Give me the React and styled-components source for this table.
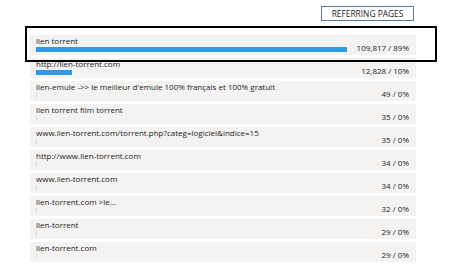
import React from "react";
import styled, { createGlobalStyle } from "styled-components";

const Global = createGlobalStyle`
  html, body { margin: 0; padding: 0; background: #ffffff; }
  body { font-family: "Open Sans", "Liberation Sans", sans-serif; color: #222; }
`;

const Page = styled.div`
  position: relative;
  width: 466px;
  height: 264px;
  overflow: hidden;
`;

const Panel = styled.div`
  margin-left: 30px;
  width: 386px;
  padding-top: 6px;
  display: flex;
  flex-direction: column;
`;

const HeaderRow = styled.div`
  display: flex;
  justify-content: flex-end;
  padding-right: 2px;
  margin-bottom: 14px;
`;

const HeaderTag = styled.div`
  box-sizing: border-box;
  width: 93px;
  height: 15px;
  border: 1px solid #5b7896;
  font-size: 8.4px;
  line-height: 13px;
  text-align: center;
  color: #222;
`;

const List = styled.div`
  display: flex;
  flex-direction: column;
  gap: 3px;
`;

const Row = styled.div`
  box-sizing: border-box;
  height: 20px;
  background: #f4f3f2;
  padding: 1px 7px 0 6px;
  display: grid;
  grid-template-columns: 311px 1fr;
  align-items: end;
`;

const Left = styled.div`
  display: flex;
  flex-direction: column;
  padding-bottom: 4px;
`;

const Label = styled.div`
  font-size: 8px;
  line-height: 10px;
  height: 10px;
  white-space: nowrap;
  color: #222;
  margin-bottom: 1px;
`;

const Bar = styled.div`
  height: 5px;
  background: ${(p) => (p.$faint ? "rgba(45,154,232,0.25)" : "#2d9ae8")};
`;

const Value = styled.div`
  font-size: 8px;
  line-height: 10px;
  text-align: right;
  white-space: nowrap;
  color: #222;
  padding-bottom: 3px;
`;

const Highlight = styled.div`
  position: absolute;
  left: 25px;
  top: 26px;
  width: 412px;
  height: 36px;
  box-sizing: border-box;
  border: 2.5px solid #000;
  pointer-events: none;
`;

const rows = [
  { label: "lien torrent", count: 109817, pct: 89 },
  { label: "http://lien-torrent.com", count: 12828, pct: 10 },
  { label: "lien-emule ->> le meilleur d'emule 100% français et 100% gratuit", count: 49, pct: 0 },
  { label: "lien torrent film torrent", count: 35, pct: 0 },
  { label: "www.lien-torrent.com/torrent.php?categ=logiciel&indice=15", count: 35, pct: 0 },
  { label: "http://www.lien-torrent.com", count: 34, pct: 0 },
  { label: "www.lien-torrent.com", count: 34, pct: 0 },
  { label: "lien-torrent.com >le...", count: 32, pct: 0 },
  { label: "lien-torrent", count: 29, pct: 0 },
  { label: "lien-torrent.com", count: 29, pct: 0 },
];

const MAX_BAR = 311;

export default function App() {
  const max = rows[0].count;
  return (
    <Page>
      <Global />
      <Panel>
        <HeaderRow>
          <HeaderTag>REFERRING PAGES</HeaderTag>
        </HeaderRow>
        <List>
          {rows.map((r, i) => {
            const w = (r.count / max) * MAX_BAR;
            const faint = w < 1;
            return (
              <Row key={i}>
                <Left>
                  <Label>{r.label}</Label>
                  <Bar $faint={faint} style={{ width: faint ? 1 : i === 1 ? 36 : Math.round(w) }} />
                </Left>
                <Value>
                  {r.count.toLocaleString("en-US")} / {r.pct}%
                </Value>
              </Row>
            );
          })}
        </List>
      </Panel>
      <Highlight />
    </Page>
  );
}
